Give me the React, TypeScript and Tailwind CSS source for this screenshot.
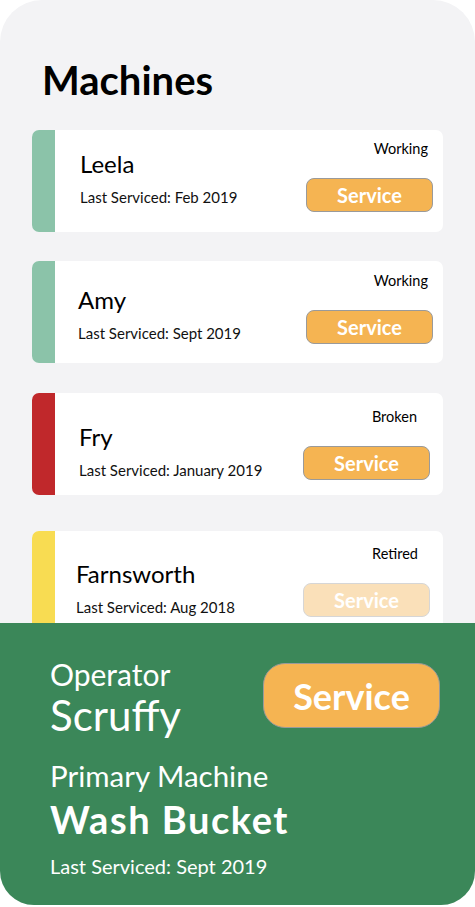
import React from 'react';

type Machine = {
    name: string;
    status: string;
    lastServiced: string;
    stripe: string;
    cardClass: string;
    leftClass: string;
    rightClass: string;
    statusClass: string;
    faded?: boolean;
};

const machines: Machine[] = [
    {
        name: 'Leela',
        status: 'Working',
        lastServiced: 'Feb 2019',
        stripe: 'bg-[#8bc3a9]',
        cardClass: 'mt-[26px]',
        leftClass: 'pl-[25px] pt-[20px]',
        rightClass: 'pr-[10px] pt-[11px]',
        statusClass: 'mr-[5px]',
    },
    {
        name: 'Amy',
        status: 'Working',
        lastServiced: 'Sept 2019',
        stripe: 'bg-[#8bc3a9]',
        cardClass: 'mt-[29px]',
        leftClass: 'pl-[23px] pt-[25px]',
        rightClass: 'pr-[10px] pt-[12px]',
        statusClass: 'mr-[5px]',
    },
    {
        name: 'Fry',
        status: 'Broken',
        lastServiced: 'January 2019',
        stripe: 'bg-[#c0282b]',
        cardClass: 'mt-[30px]',
        leftClass: 'pl-[24px] pt-[30px]',
        rightClass: 'pr-[13px] pt-[16px]',
        statusClass: 'mr-[13px]',
    },
    {
        name: 'Farnsworth',
        status: 'Retired',
        lastServiced: 'Aug 2018',
        stripe: 'bg-[#f8dc52]',
        cardClass: 'mt-[36px]',
        leftClass: 'pl-[21px] pt-[29px]',
        rightClass: 'pr-[13px] pt-[15px]',
        statusClass: 'mr-[12px]',
        faded: true,
    },
];

function MachineCard({ machine }: { machine: Machine }) {
    return (
        <div className={`flex h-[102px] shrink-0 overflow-hidden rounded-[7px] bg-white ${machine.cardClass}`}>
            <div className={`w-[23px] shrink-0 ${machine.stripe}`} />
            <div className="flex flex-1 justify-between">
                <div className={`flex flex-col whitespace-nowrap ${machine.leftClass}`}>
                    <div className="text-[24px] leading-[28px] text-black">{machine.name}</div>
                    <div className="mt-[10px] text-[15px] leading-[18px] text-[#111]">
                        Last Serviced: {machine.lastServiced}
                    </div>
                </div>
                <div className={`flex flex-col items-end ${machine.rightClass}`}>
                    <div className={`text-[14.5px] leading-[16px] text-black ${machine.statusClass}`}>
                        {machine.status}
                    </div>
                    <button
                        className={`mt-[21px] flex h-[34px] w-[127px] items-center justify-center rounded-[8px] border border-[#9a9a9a] bg-[#f5b452] text-[20px] font-bold text-white ${machine.faded ? 'opacity-40' : ''}`}
                    >
                        Service
                    </button>
                </div>
            </div>
        </div>
    );
}

export default function App() {
    return (
        <div className="w-[475px] bg-white" style={{ fontFamily: 'Lato, "Noto Sans", sans-serif' }}>
            <div className="flex h-[905px] flex-col overflow-hidden rounded-t-[42px] rounded-b-[34px] bg-[#f3f3f5]">
                <div className="flex flex-1 flex-col overflow-hidden px-[32px]">
                    <h1 className="mt-[56px] pl-[10px] text-[40px] font-bold leading-[48px] text-black">Machines</h1>
                    {machines.map((m) => (
                        <MachineCard key={m.name} machine={m} />
                    ))}
                </div>
                <div className="flex h-[282px] shrink-0 bg-[#3b8759] pl-[50px] pr-[35px] text-white">
                    <div className="flex min-w-0 flex-1 flex-col whitespace-nowrap pt-[33px]">
                        <div className="text-[30px] leading-[36px]">Operator</div>
                        <div className="text-[42px] leading-[46px]">Scruffy</div>
                        <div className="mt-[21px] text-[29.5px] leading-[34px]">Primary Machine</div>
                        <div className="mt-[4px] text-[38px] font-bold leading-[44px] tracking-[0.04em]">Wash Bucket</div>
                        <div className="mt-[13px] text-[20px] leading-[24px]">Last Serviced: Sept 2019</div>
                    </div>
                    <div className="shrink-0 pt-[40px]">
                        <button className="flex h-[65px] w-[177px] items-center justify-center rounded-[22px] border border-[#9a9a9a] bg-[#f5b452] text-[36px] font-bold text-white">
                            Service
                        </button>
                    </div>
                </div>
            </div>
        </div>
    );
}
